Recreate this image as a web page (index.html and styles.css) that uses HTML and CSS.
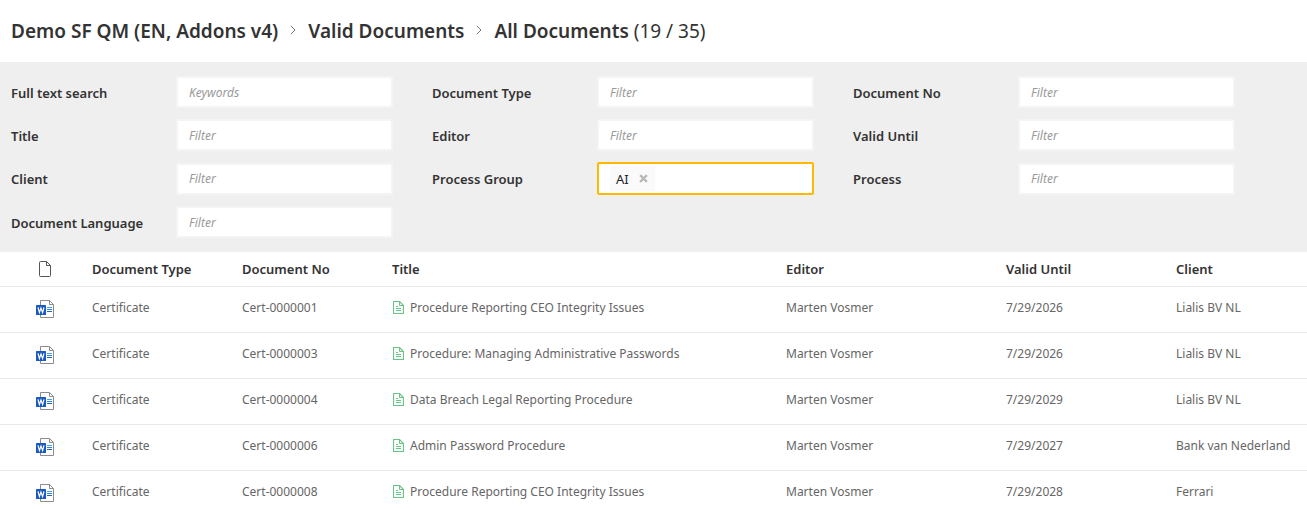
FILE: index.html
```html
<!DOCTYPE html>
<html lang="en">
<head>
    <meta charset="UTF-8">
    <title>All Documents</title>
    <link rel="stylesheet" href="styles.css">
</head>
<body>
    <svg class="sprite" aria-hidden="true">
        <symbol id="icon-word" viewBox="0 0 18 18">
            <path d="M4.5 .5h9l4 4v13h-13z" fill="#fff" stroke="#8c8c8c"/>
            <path d="M13.5 .5v4h4" fill="none" stroke="#8c8c8c"/>
            <path d="M11 7.5h5" stroke="#3fa0ee"/>
            <path d="M11 9.5h5" stroke="#2b88d8"/>
            <path d="M11 11.5h5" stroke="#1b66c9"/>
            <rect y="5" width="10" height="10" rx=".6" fill="#185abd"/>
            <path d="M2 7.3l1.4 5.2L5 8l1.6 4.5L8 7.3" fill="none" stroke="#fff" stroke-width="1.2"/>
        </symbol>
        <symbol id="icon-page" viewBox="0 0 12 16">
            <path d="M1.5 .5h6l4 4v10a1 1 0 0 1-1 1h-9a1 1 0 0 1-1-1v-13a1 1 0 0 1 1-1z" fill="none" stroke="#555"/>
            <path d="M7.5 .5v4h4" fill="none" stroke="#555"/>
        </symbol>
        <symbol id="icon-text" viewBox="0 0 11 13">
            <path d="M.5 .5h6l4 4v8H.5z" fill="none" stroke="#67c587" stroke-width="1.2"/>
            <path d="M6.5 .5v4h4" fill="none" stroke="#67c587"/>
            <path d="M3 5.5h2M3 7.5h5M3 9.5h5" stroke="#67c587"/>
        </symbol>
    </svg>

    <nav class="breadcrumb" aria-label="Breadcrumb">
        <a href="#">Demo SF QM (EN, Addons v4)</a>
        <svg class="chevron" viewBox="0 0 6 10"><path d="M.8 .8L5 5L.8 9.2"/></svg>
        <a href="#">Valid Documents</a>
        <svg class="chevron" viewBox="0 0 6 10"><path d="M.8 .8L5 5L.8 9.2"/></svg>
        <h1>All Documents <span class="count">(19 / 35)</span></h1>
    </nav>

    <form class="filters">
        <div class="filter">
            <label for="fulltext">Full text search</label>
            <input type="text" id="fulltext" placeholder="Keywords">
        </div>
        <div class="filter">
            <label for="doc-type">Document Type</label>
            <input type="text" id="doc-type" placeholder="Filter">
        </div>
        <div class="filter">
            <label for="doc-no">Document No</label>
            <input type="text" id="doc-no" placeholder="Filter">
        </div>
        <div class="filter">
            <label for="title">Title</label>
            <input type="text" id="title" placeholder="Filter">
        </div>
        <div class="filter">
            <label for="editor">Editor</label>
            <input type="text" id="editor" placeholder="Filter">
        </div>
        <div class="filter">
            <label for="valid-until">Valid Until</label>
            <input type="text" id="valid-until" placeholder="Filter">
        </div>
        <div class="filter">
            <label for="client">Client</label>
            <input type="text" id="client" placeholder="Filter">
        </div>
        <div class="filter">
            <label for="process-group">Process Group</label>
            <div class="tag-box">
                <span class="tag">AI
                    <button type="button" aria-label="Remove AI"><svg viewBox="0 0 8 8"><path d="M1 1l6 6M7 1L1 7"/></svg></button>
                </span>
                <input type="text" id="process-group">
            </div>
        </div>
        <div class="filter">
            <label for="process">Process</label>
            <input type="text" id="process" placeholder="Filter">
        </div>
        <div class="filter">
            <label for="language">Document Language</label>
            <input type="text" id="language" placeholder="Filter">
        </div>
    </form>

    <table class="documents">
        <thead>
            <tr>
                <th class="col-icon" aria-label="File type"><svg class="page-icon"><use href="#icon-page"/></svg></th>
                <th class="col-type">Document Type</th>
                <th class="col-no">Document No</th>
                <th>Title</th>
                <th class="col-editor">Editor</th>
                <th class="col-date">Valid Until</th>
                <th class="col-client">Client</th>
            </tr>
        </thead>
        <tbody>
            <tr>
                <td class="col-icon"><svg class="word-icon"><use href="#icon-word"/></svg></td>
                <td>Certificate</td>
                <td>Cert-0000001</td>
                <td><a href="#"><svg class="text-icon"><use href="#icon-text"/></svg>Procedure Reporting CEO Integrity Issues</a></td>
                <td>Marten Vosmer</td>
                <td>7/29/2026</td>
                <td>Lialis BV NL</td>
            </tr>
            <tr>
                <td class="col-icon"><svg class="word-icon"><use href="#icon-word"/></svg></td>
                <td>Certificate</td>
                <td>Cert-0000003</td>
                <td><a href="#"><svg class="text-icon"><use href="#icon-text"/></svg>Procedure: Managing Administrative Passwords</a></td>
                <td>Marten Vosmer</td>
                <td>7/29/2026</td>
                <td>Lialis BV NL</td>
            </tr>
            <tr>
                <td class="col-icon"><svg class="word-icon"><use href="#icon-word"/></svg></td>
                <td>Certificate</td>
                <td>Cert-0000004</td>
                <td><a href="#"><svg class="text-icon"><use href="#icon-text"/></svg>Data Breach Legal Reporting Procedure</a></td>
                <td>Marten Vosmer</td>
                <td>7/29/2029</td>
                <td>Lialis BV NL</td>
            </tr>
            <tr>
                <td class="col-icon"><svg class="word-icon"><use href="#icon-word"/></svg></td>
                <td>Certificate</td>
                <td>Cert-0000006</td>
                <td><a href="#"><svg class="text-icon"><use href="#icon-text"/></svg>Admin Password Procedure</a></td>
                <td>Marten Vosmer</td>
                <td>7/29/2027</td>
                <td>Bank van Nederland</td>
            </tr>
            <tr>
                <td class="col-icon"><svg class="word-icon"><use href="#icon-word"/></svg></td>
                <td>Certificate</td>
                <td>Cert-0000008</td>
                <td><a href="#"><svg class="text-icon"><use href="#icon-text"/></svg>Procedure Reporting CEO Integrity Issues</a></td>
                <td>Marten Vosmer</td>
                <td>7/29/2028</td>
                <td>Ferrari</td>
            </tr>
        </tbody>
    </table>
</body>
</html>
```

FILE: styles.css
```css
* { box-sizing: border-box; }

body {
    margin: 0;
    background: #fff;
    color: #333;
    font-family: "Segoe UI", "Noto Sans", "Open Sans", sans-serif;
    font-size: 13px;
}

a { color: inherit; text-decoration: none; }
.sprite { display: none; }

/* breadcrumb */
.breadcrumb {
    display: flex;
    align-items: center;
    gap: 12px;
    height: 62px;
    padding: 0 11px;
    font-size: 19px;
    font-weight: 600;
    white-space: nowrap;
}
.breadcrumb h1 { margin: 0; font-size: inherit; font-weight: inherit; }
.breadcrumb .count { font-weight: 400; }
.chevron { width: 6px; height: 10px; margin-bottom: 3px; fill: none; stroke: #777; }

/* filters */
.filters {
    display: grid;
    grid-template-columns: repeat(3, minmax(0, 1fr));
    row-gap: 11px;
    padding: 14px 33px 14px 11px;
    background: #efefef;
}
.filter { display: flex; align-items: center; padding-right: 39px; }
.filter label { flex: 0 0 165px; padding-top: 1px; font-weight: 600; }
.filter input {
    flex: 1;
    min-width: 0;
    height: 32px;
    padding: 0 11px;
    border: 2px solid #f4f4f4;
    background: #fff;
    font: inherit;
    font-size: 12px;
}
.filter input::placeholder { color: #999; font-style: italic; }

.tag-box {
    display: flex;
    flex: 1;
    align-items: center;
    min-width: 0;
    height: 33px;
    padding-left: 11px;
    border: 2px solid #ffb900;
    border-radius: 2px;
    background: #fff;
}
.filter .tag-box input { height: 24px; border: 0; outline: 0; }
.tag {
    display: flex;
    align-items: center;
    gap: 9px;
    height: 25px;
    padding: 0 6px;
    background: #fafafa;
    color: #222;
}
.tag button { display: flex; padding: 1px; border: 0; background: none; }
.tag svg { width: 9px; height: 9px; stroke: #b8b8b8; stroke-width: 2; }

/* documents */
.documents { width: 100%; border-spacing: 0; table-layout: fixed; }
.documents th, .documents td {
    padding: 0;
    border-bottom: 1px solid #eaeaea;
    text-align: left;
    white-space: nowrap;
}
.documents th { height: 35px; font-weight: 600; }
.documents td { height: 46px; padding-bottom: 4px; color: #666; font-size: 12px; }
.documents a { display: flex; align-items: center; gap: 6px; padding-left: 1px; }
.documents svg { display: block; }
.documents .col-icon { width: 92px; padding-left: 36px; }
.documents td.col-icon { padding-bottom: 2px; }
.col-type, .col-no { width: 150px; }
.col-editor { width: 220px; }
.col-date { width: 170px; }
.col-client { width: 131px; }

.page-icon { width: 12px; height: 16px; margin-left: 3px; }
.word-icon { width: 18px; height: 18px; }
.text-icon { width: 11px; height: 13px; }
```
